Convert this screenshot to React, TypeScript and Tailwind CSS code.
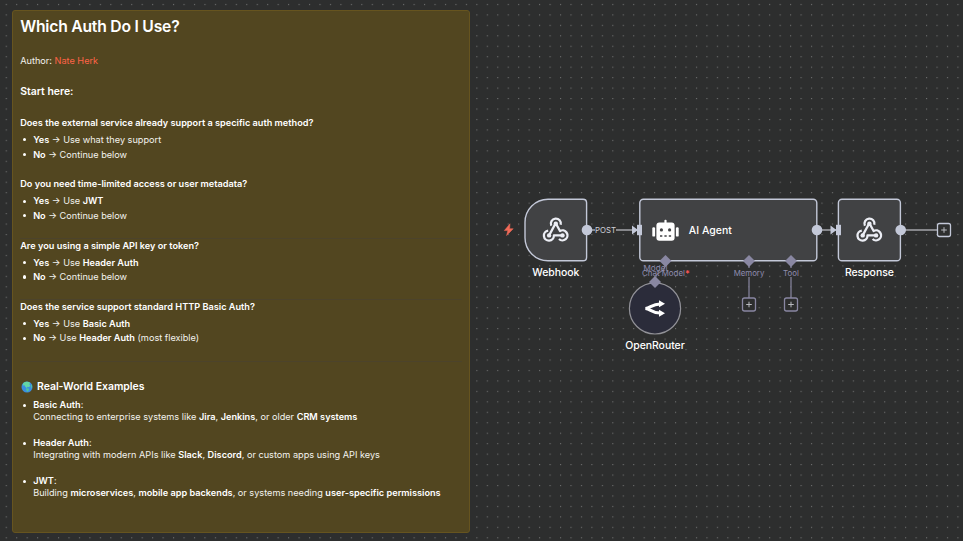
import React from "react";

type Part = { t: string; b?: boolean };

function Rich({ parts }: { parts: Part[] }) {
  return (
    <>
      {parts.map((p, i) =>
        p.b ? <strong key={i} className="font-semibold text-white">{p.t}</strong> : <span key={i}>{p.t}</span>
      )}
    </>
  );
}

function Question({ title, items, className }: { title: string; items: Part[][]; className: string }) {
  return (
    <section className={className}>
      <h4 className="h-[13px] font-semibold leading-[13px] text-white">{title}</h4>
      <ul className="mt-[3.5px]">
        {items.map((it, i) => (
          <li key={i} className="flex h-[14.6px] items-center">
            <span className="ml-[2.5px] mr-[7.3px] size-[3.2px] rounded-full bg-white" />
            <p><Rich parts={it} /></p>
          </li>
        ))}
      </ul>
    </section>
  );
}

function Example({ title, parts }: { title: string; parts: Part[] }) {
  return (
    <li className="flex h-[38px]">
      <span className="ml-[2.5px] mr-[7.3px] mt-[5px] size-[3.2px] rounded-full bg-white" />
      <div className="leading-[12px]">
        <p><strong className="font-semibold text-white">{title}</strong>:</p>
        <p><Rich parts={parts} /></p>
      </div>
    </li>
  );
}

function Globe() {
  return (
    <svg viewBox="0 0 12 12" className="size-[12px]">
      <circle cx="6" cy="6" r="5.5" fill="#3a8ee0" />
      <path d="M2.2 2.2C4 .5 7.5.3 9.2 1.7L8.3 3.2 9.4 4.6 8 6.2 6.6 5.8 5.8 7 4.3 5.8 3.5 4.2 1.8 4.6Z" fill="#63d6a4" />
      <path d="M5 7.2 7.8 7.5 8 9 6.2 11 5.2 9Z" fill="#4cc3a0" />
      <path d="M10.2 3.3 11.2 5 10.6 7.5 9.8 6Z" fill="#52c3a1" />
    </svg>
  );
}

function HookIcon({ x, y }: { x: number; y: number }) {
  return (
    <g transform={`translate(${x} ${y})`} fill="none" stroke="#eceef5" strokeWidth="2.3" strokeLinejoin="round">
      <path d="M-4.5 -4.3A5 5 0 1 1 4.9 -5.2" />
      <path d="M-.4 -6.3 -6.7 5.4" />
      <path d="M.2 -6.3 4.2 1A5 5 0 1 1 3.2 9" />
      <path d="M-7.6 .6A5 5 0 1 0 -1.9 5.4H6.7" />
      <g fill="#eceef5" stroke="none"><circle cx="0" cy="-6.3" r="2.2" /><circle cx="-6.7" cy="5.4" r="2.2" /><circle cx="6.7" cy="5.4" r="2.2" /></g>
    </g>
  );
}

function Plus({ x, y, stroke }: { x: number; y: number; stroke: string }) {
  return (
    <g transform={`translate(${x} ${y})`} fill="none">
      <rect x="-6.5" y="-6.5" width="13" height="13" rx="2" fill="#2d2e2e" stroke={stroke} strokeWidth="1.3" />
      <path d="M-2.8 0H2.8M0 -2.8V2.8" stroke="#b9bac0" strokeWidth="1" />
    </g>
  );
}

function Diamond({ x, y }: { x: number; y: number }) {
  return <path d="M0 -6 6 0 0 6-6 0Z" transform={`translate(${x} ${y})`} fill="#8987a2" />;
}

function Diagram() {
  return (
    <svg className="absolute inset-0" width="963" height="541" viewBox="0 0 963 541" fontFamily="Inter, sans-serif">
      <path d="M510 223.8 504.3 230.6H507.8L506.6 235.6 513.2 228.7H509.6Z" fill="#f16a58" stroke="#f16a58" strokeWidth=".5" strokeLinejoin="round" />
      <path d="M587 230H640M817 230H838M901 230H937" stroke="#a4a5ab" strokeWidth="1.5" />
      <rect x="595" y="224" width="21" height="12" fill="#2d2e2e" />
      <path d="M665.5 262C665.5 276 655 268 655 282" fill="none" stroke="#77768a" strokeWidth="1.3" />
      <path d="M749 262V298M791 262V298" stroke="#77768a" strokeWidth="1.5" />
      <g fill="#414244" stroke="#c3c8d8" strokeWidth="1.4">
        <path d="M548 199.2H583Q586.6 199.2 586.6 202.8V257.2Q586.6 260.8 583 260.8H548A23 23 0 0 1 525 237.8V222.2A23 23 0 0 1 548 199.2Z" />
        <rect x="639.8" y="199.2" width="177" height="61.6" rx="3.6" />
        <rect x="838.4" y="199.2" width="62" height="61.6" rx="3.6" />
      </g>
      <g fill="#c3c8d8">
        <circle cx="587" cy="230" r="5.3" /><circle cx="817" cy="230" r="5.3" /><circle cx="900.7" cy="230" r="5.3" />
        <rect x="637" y="224.8" width="5" height="10.4" /><rect x="836" y="224.8" width="5" height="10.4" />
        <path d="M632 225.6 638 230 632 234.4ZM830.5 225.6 836.5 230 830.5 234.4Z" />
      </g>
      <HookIcon x={555.8} y={230} />
      <HookIcon x={869.4} y={230} />
      <g fill="#fff">
        <rect x="656.4" y="222.6" width="18.2" height="18.2" rx="3" />
        <rect x="664.4" y="219.8" width="2.2" height="4" rx="1" />
        <rect x="652.3" y="227.2" width="2.8" height="9.4" rx="1.2" /><rect x="675.9" y="227.2" width="2.8" height="9.4" rx="1.2" />
      </g>
      <g fill="#414244">
        <circle cx="661.4" cy="229.9" r="1.6" /><circle cx="669.6" cy="229.9" r="1.6" />
        <path d="M660 235.2H662.3V236.7H660ZM664.4 235.2H666.7V236.7H664.4ZM668.8 235.2H671.1V236.7H668.8Z" />
      </g>
      <circle cx="655" cy="308.4" r="25.6" fill="#2b2c3a" stroke="#929298" strokeWidth="1.2" />
      <path d="M645.3 308.5C650 308.5 652 303.9 660 303.9M645.3 308.5C650 308.5 652 313.1 660 313.1" fill="none" stroke="#fff" strokeWidth="3" />
      <path d="M659 300.2 665 303.7 659 307.2ZM659 309.8 665 313.3 659 316.8Z" fill="#fff" />
      <Diamond x={665.5} y={261} /><Diamond x={749} y={261} /><Diamond x={791} y={261} /><Diamond x={655} y={282} />
      <g fill="#2d2e2e"><rect x="733" y="268" width="32" height="9" /><rect x="782" y="268" width="18" height="9" /></g>
      <g fill="#8f8daf" fontSize="7.85" textAnchor="middle">
        <text x="655.5" y="271" textLength="24" lengthAdjust="spacingAndGlyphs">Model</text><text x="663.5" y="276" textLength="43" lengthAdjust="spacingAndGlyphs">Chat Model</text>
        <text x="749" y="276">Memory</text><text x="791" y="276">Tool</text>
      </g>
      <text x="685" y="276.5" fontSize="9" fontWeight="600" fill="#ff5555">*</text>
      <text x="595" y="233" fontSize="7.85" fill="#cfd0d8" textLength="21" lengthAdjust="spacingAndGlyphs">POST</text>
      <g fill="#fff" fontSize="10.46" fontWeight="550" textAnchor="middle">
        <text x="555.8" y="276" textLength="47">Webhook</text><text x="869.4" y="276" textLength="49">Response</text><text x="655" y="349" textLength="59.5">OpenRouter</text><text x="710.3" y="234" textLength="43">AI Agent</text>
      </g>
      <Plus x={944} y={230} stroke="#c3c8d8" /><Plus x={749} y={304.5} stroke="#8987a2" /><Plus x={791} y={304.5} stroke="#8987a2" />
    </svg>
  );
}

function Dots() {
  return (
    <svg className="absolute inset-0" width="963" height="541">
      <defs><pattern id="dots" x="5.7" y="3.9" width="10.458" height="10.458" patternUnits="userSpaceOnUse"><rect width="1.1" height="1.1" fill="#707171" /></pattern></defs>
      <rect width="963" height="541" fill="url(#dots)" />
    </svg>
  );
}

export default function App() {
  return (
    <main className="relative h-[541px] w-[963px] overflow-hidden bg-[#2d2e2e] pl-[12px] pt-[10px] font-[Inter,sans-serif] text-[9.17px]">
      <Dots />
      <article className="relative flex h-[523px] w-[457.5px] flex-col rounded-[3px] border border-[#66541f] bg-[#524620] pl-[7.2px] pr-[7px] text-[#f3f2ee]">
        <h1 className="mt-[4px] h-[24px] text-[15.7px] font-semibold leading-[24px] tracking-[-0.22px] text-white">Which Auth Do I Use?</h1>
        <p className="mt-[15px] h-[14px] leading-[14px]">Author: <a className="text-[#ff6347]">Nate Herk</a></p>
        <h3 className="mt-[16px] h-[15px] text-[10.46px] font-semibold leading-[15px] text-white">Start here:</h3>
        <Question className="mt-[17px] h-[61.3px]" title="Does the external service already support a specific auth method?" items={[[{ t: "Yes", b: true }, { t: " → Use what they support" }], [{ t: "No", b: true }, { t: " → Continue below" }]]} />
        <Question className="h-[61.3px]" title="Do you need time-limited access or user metadata?" items={[[{ t: "Yes", b: true }, { t: " → Use " }, { t: "JWT", b: true }], [{ t: "No", b: true }, { t: " → Continue below" }]]} />
        <Question className="h-[61.3px] shadow-[0_-1px_0_#4c432b]" title="Are you using a simple API key or token?" items={[[{ t: "Yes", b: true }, { t: " → Use " }, { t: "Header Auth", b: true }], [{ t: "No", b: true }, { t: " → Continue below" }]]} />
        <Question className="h-[61.3px] shadow-[0_-1px_0_#4c432b,0_1px_0_#4c432b]" title="Does the service support standard HTTP Basic Auth?" items={[[{ t: "Yes", b: true }, { t: " → Use " }, { t: "Basic Auth", b: true }], [{ t: "No", b: true }, { t: " → Use " }, { t: "Header Auth", b: true }, { t: " (most flexible)" }]]} />
        <h3 className="mt-[18px] flex h-[15px] items-center gap-[4px] pl-[0.8px] text-[10.46px] font-semibold tracking-[-0.02px] text-white"><Globe />Real-World Examples</h3>
        <ul className="mt-[5px]">
          <Example title="Basic Auth" parts={[{ t: "Connecting to enterprise systems like " }, { t: "Jira", b: true }, { t: ", " }, { t: "Jenkins", b: true }, { t: ", or older " }, { t: "CRM systems", b: true }]} />
          <Example title="Header Auth" parts={[{ t: "Integrating with modern APIs like " }, { t: "Slack", b: true }, { t: ", " }, { t: "Discord", b: true }, { t: ", or custom apps using API keys" }]} />
          <Example title="JWT" parts={[{ t: "Building " }, { t: "microservices", b: true }, { t: ", " }, { t: "mobile app backends", b: true }, { t: ", or systems needing " }, { t: "user-specific permissions", b: true }]} />
        </ul>
      </article>
      <Diagram />
    </main>
  );
}
